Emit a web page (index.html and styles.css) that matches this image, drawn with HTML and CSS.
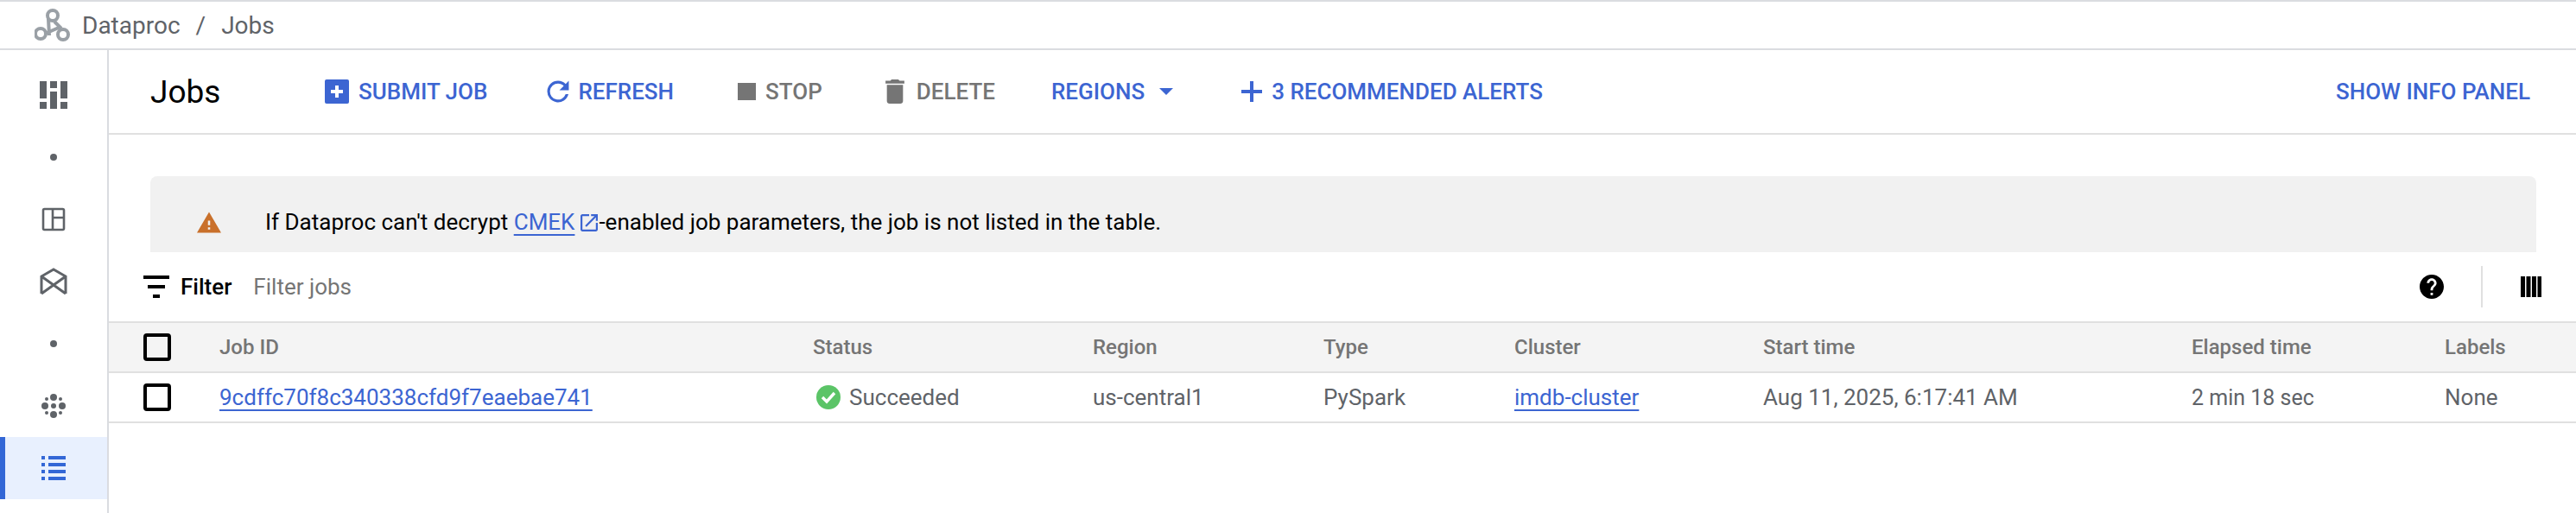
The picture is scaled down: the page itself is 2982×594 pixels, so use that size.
FILE: index.html
```html
<!DOCTYPE html>
<html lang="en">
<head>
  <meta charset="UTF-8">
  <title>Jobs - Dataproc</title>
  <link rel="stylesheet" href="styles.css">
</head>
<body>
<header class="topbar">
  <svg class="logo" viewBox="0 0 42 40" fill="none" stroke="#9aa0a6" stroke-width="4">
    <circle cx="21" cy="9" r="6"/>
    <circle cx="7" cy="30" r="6"/>
    <circle cx="33" cy="31" r="6"/>
    <path d="M16 13l1 19M23 16l8 8M12 30l16-7"/>
  </svg>
  <span>Dataproc</span>
  <span class="crumb-sep">/</span>
  <span>Jobs</span>
</header>

<div class="main">
  <nav class="sidebar">
    <div class="nav-item">
      <svg class="ic-32" viewBox="0 0 32 32" fill="#5f6368"><path d="M0 0h8v20H0zM0 24h8v8H0zM12 0h8v8h-8zM12 12h8v20h-8zM24 0h8v20h-8zM24 24h8v8h-8z"/></svg>
    </div>
    <div class="nav-item"><span class="nav-dot"></span></div>
    <div class="nav-item">
      <svg class="ic-28" viewBox="0 0 28 28" fill="none" stroke="#5f6368" stroke-width="2.6"><rect x="2" y="2" width="24" height="24" rx="1.5"/><path d="M13 2v24M13 12h13"/></svg>
    </div>
    <div class="nav-item">
      <svg class="ic-32" viewBox="0 0 32 32" fill="none" stroke="#5f6368" stroke-width="3"><path d="M2 30V10L16 2l14 8v20M2 10l28 20M30 10L2 30"/></svg>
    </div>
    <div class="nav-item"><span class="nav-dot"></span></div>
    <div class="nav-item">
      <svg class="ic-32" viewBox="0 0 32 32" fill="#5f6368">
        <circle cx="16" cy="6" r="4"/><circle cx="6" cy="16" r="4"/><circle cx="26" cy="16" r="4"/><circle cx="16" cy="26" r="4"/>
        <circle cx="16" cy="16" r="3"/>
        <circle cx="8" cy="8" r="2"/><circle cx="24" cy="8" r="2"/><circle cx="8" cy="24" r="2"/><circle cx="24" cy="24" r="2"/>
      </svg>
    </div>
    <div class="nav-item nav-on">
      <svg class="ic-28" viewBox="0 0 28 28" fill="#3367d6"><path d="M0 0h4v4H0zM8 0h20v4H8zM0 8h4v4H0zM8 8h20v4H8zM0 16h4v4H0zM8 16h20v4H8zM0 24h4v4H0zM8 24h20v4H8z"/></svg>
    </div>
  </nav>

  <div class="content">
    <div class="toolbar">
      <h1 class="title">Jobs</h1>
      <div class="btn">
        <svg class="ic-28" viewBox="0 0 28 28"><rect width="28" height="28" rx="2" fill="#3c65d2"/><path d="M12 7h4v5h5v4h-5v5h-4v-5H7v-4h5z" fill="#fff"/></svg>
        SUBMIT JOB
      </div>
      <div class="btn btn-refresh">
        <svg class="ic-28" viewBox="3 3 18 18" fill="#3c65d2"><path d="M17.65 6.35A7.96 7.96 0 0 0 12 4a8 8 0 1 0 7.73 10h-2.08A6 6 0 1 1 12 6c1.66 0 3.14.69 4.22 1.78L13 11h7V4z"/></svg>
        REFRESH
      </div>
      <div class="btn btn-off">
        <span class="stop"></span>
        STOP
      </div>
      <div class="btn btn-off">
        <svg class="ic-28" viewBox="5 3 14 18" fill="#757575"><path d="M6 19c0 1.1.9 2 2 2h8c1.1 0 2-.9 2-2V7H6v12zM19 4h-3.5l-1-1h-5l-1 1H5v2h14V4z"/></svg>
        DELETE
      </div>
      <div class="btn btn-regions">
        REGIONS
        <span class="caret"></span>
      </div>
      <div class="btn btn-alerts">
        <svg class="ic-24" viewBox="0 0 24 24" fill="#3c65d2"><path d="M10 0h4v10h10v4H14v10h-4V14H0v-4h10z"/></svg>
        3 RECOMMENDED ALERTS
      </div>
      <div class="btn btn-info">SHOW INFO PANEL</div>
    </div>

    <div class="notice">
      <svg class="warn" viewBox="1 2 22 19" fill="#c9702b"><path d="M1 21h22L12 2 1 21zm12-3h-2v-2h2v2zm0-4h-2v-4h2v4z"/></svg>
      <p>If Dataproc can't decrypt <a href="#">CMEK</a><svg class="ext" viewBox="3 3 18 18" fill="#3c65d2"><path d="M19 19H5V5h7V3H5c-1.11 0-2 .9-2 2v14c0 1.1.89 2 2 2h14c1.1 0 2-.9 2-2v-7h-2v7zM14 3v2h3.59l-9.83 9.83 1.41 1.41L19 6.41V10h2V3h-7z"/></svg>-enabled job parameters, the job is not listed in the table.</p>
    </div>

    <div class="filterbar">
      <svg class="filter-ic" viewBox="0 0 30 26" fill="#000"><path d="M0 0h30v4H0zM5 11h20v4H5zM11 22h8v4h-8z"/></svg>
      <span class="filter-label">Filter</span>
      <span class="filter-hint">Filter jobs</span>
      <svg class="help" viewBox="2 2 20 20" fill="#000"><path d="M12 2C6.48 2 2 6.48 2 12s4.48 10 10 10 10-4.48 10-10S17.52 2 12 2zm1 17h-2v-2h2v2zm2.07-7.75l-.9.92C13.45 12.9 13 13.5 13 15h-2v-.5c0-1.1.45-2.1 1.17-2.83l1.24-1.26c.37-.36.59-.86.59-1.41 0-1.1-.9-2-2-2s-2 .9-2 2H8c0-2.21 1.79-4 4-4s4 1.79 4 4c0 .88-.36 1.68-.93 2.25z"/></svg>
      <span class="divider"></span>
      <svg class="ic-24" viewBox="0 0 24 24" fill="#000"><path d="M0 0h5v24H0zM6.500 0h5v24h-5zM13 0h5v24h-5zM19.500 0H24v24h-4.500z"/></svg>
    </div>

    <div class="row row-head">
      <span class="check"></span>
      <span>Job ID</span>
      <span>Status</span>
      <span>Region</span>
      <span>Type</span>
      <span>Cluster</span>
      <span>Start time</span>
      <span>Elapsed time</span>
      <span>Labels</span>
    </div>
    <div class="row">
      <span class="check"></span>
      <a href="#">9cdffc70f8c340338cfd9f7eaebae741</a>
      <span class="status">
        <svg class="ok" viewBox="0 0 28 28"><circle cx="14" cy="14" r="14" fill="#5bc467"/><path d="M7 14l5 5 9-10" fill="none" stroke="#fff" stroke-width="3.400"/></svg>
        Succeeded
      </span>
      <span>us-central1</span>
      <span>PySpark</span>
      <a href="#">imdb-cluster</a>
      <span>Aug 11, 2025, 6:17:41 AM</span>
      <span class="elapsed">2 min 18 sec</span>
      <span>None</span>
    </div>
  </div>
</div>
</body>
</html>
```

FILE: styles.css
```css
*{padding: 0; margin: 0; box-sizing: border-box;}
html, body{
  height: 100%;
}
body{
  display: flex;
  flex-direction: column;
  font-family: Roboto, "Liberation Sans", sans-serif;
  font-size: 26px;
  color: #5f6368;
  background-color: #fff;
  overflow: hidden;
}
a{
  color: #3c65d2;
  text-decoration: underline;
  text-decoration-thickness: 2px;
  text-underline-offset: 5px;
}
svg{
  display: block;
  flex: none;
}
.ic-24{width: 24px; height: 24px;}
.ic-28{width: 28px; height: 28px;}
.ic-32{width: 32px; height: 32px;}

/* top bar */
.topbar{
  display: flex;
  align-items: center;
  height: 58px;
  padding-left: 40px;
  border-top: 2px solid #dadce0;
  border-bottom: 2px solid #dadce0;
  font-size: 28px;
  color: #5f6368;
}
.logo{
  width: 42px;
  height: 40px;
  margin-right: 13px;
}
.crumb-sep{
  margin: 0 18px;
}

.main{
  flex: 1;
  display: flex;
}

/* left nav */
.sidebar{
  width: 126px;
  padding-top: 16px;
  border-right: 2px solid #dadce0;
}
.nav-item{
  display: flex;
  align-items: center;
  justify-content: center;
  height: 72px;
}
.nav-on{
  background-color: #e8f0fe;
  border-left: 6px solid #3367d6;
  padding-right: 6px;
}
.nav-dot{
  width: 8px;
  height: 8px;
  border-radius: 50%;
  background-color: #5f6368;
}

.content{
  flex: 1;
  min-width: 0;
}

/* action bar */
.toolbar{
  display: flex;
  align-items: center;
  gap: 70px;
  height: 98px;
  padding: 0 53px 0 48px;
  border-bottom: 2px solid #e0e0e0;
}
.title{
  width: 133px;
  margin-right: -1px;
  font-size: 37px;
  font-weight: 400;
  color: #000;
}
.btn{
  display: flex;
  align-items: center;
  gap: 11px;
  font-weight: 500;
  color: #3c65d2;
  white-space: nowrap;
}
.btn-refresh{
  gap: 9px;
  margin: 0 4px 0 -2px;
}
.btn-off{
  color: #757575;
}
.btn-regions{
  gap: 17px;
  margin-left: -5px;
}
.btn-alerts{
  margin-left: 9px;
}
.btn-info{
  margin-left: auto;
}
.stop{
  width: 21px;
  height: 20px;
  background-color: #757575;
}
.caret{
  border-left: 8px solid transparent;
  border-right: 8px solid transparent;
  border-top: 8px solid #3c65d2;
}

/* info message */
.notice{
  display: flex;
  align-items: center;
  gap: 51px;
  height: 88px;
  margin: 48px 46px 0 48px;
  padding: 18px 0 0 54px;
  border-radius: 8px 8px 0 0;
  background-color: #f1f1f1;
  color: #000;
}
.warn{
  width: 28px;
  height: 25px;
}
.ext{
  display: inline-block;
  width: 20px;
  height: 20px;
  margin: 0 1px 0 7px;
  vertical-align: -2px;
}

/* filter */
.filterbar{
  display: flex;
  align-items: center;
  height: 80px;
  padding: 0 40px 0 40px;
}
.filter-ic{
  width: 30px;
  height: 26px;
  margin-right: 13px;
}
.filter-label{
  font-weight: 500;
  color: #000;
  margin-right: 25px;
}
.filter-hint{
  color: #757575;
  margin-right: auto;
}
.help{
  width: 28px;
  height: 28px;
}
.divider{
  width: 2px;
  height: 48px;
  margin: 0 44px 0 43px;
  background-color: #e0e0e0;
}

/* table */
.row{
  display: grid;
  grid-template-columns: 88px 687px 324px 267px 221px 288px 496px 293px 1fr;
  align-items: center;
  height: 58px;
  padding-left: 40px;
  border-bottom: 2px solid #e0e0e0;
  color: #5f6368;
}
.row-head{
  height: 60px;
  border-top: 2px solid #e0e0e0;
  background-color: #f4f4f4;
  font-size: 24px;
  font-weight: 500;
  color: #757575;
}
.check{
  width: 32px;
  height: 32px;
  border: 4px solid #000;
  border-radius: 4px;
}
.status{
  display: flex;
  align-items: center;
  gap: 10px;
  margin-left: 4px;
}
.ok{
  width: 28px;
  height: 28px;
}
.elapsed{
  font-size: 25px;
}
.row a{
  justify-self: start;
}
```
